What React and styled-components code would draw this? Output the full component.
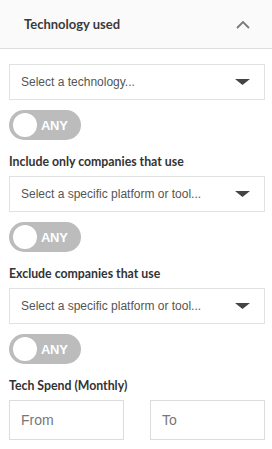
import React from 'react';
import styled, { createGlobalStyle } from 'styled-components';

const GlobalStyle = createGlobalStyle`
    html, body {
        margin: 0;
        padding: 0;
        background: #ffffff;
    }
    * {
        box-sizing: border-box;
    }
`;

const Panel = styled.div`
    width: 272px;
    height: 449px;
    background: #ffffff;
    font-family: Lato, "Open Sans", sans-serif;
`;

const Header = styled.div`
    display: flex;
    align-items: center;
    justify-content: space-between;
    height: 49px;
    padding: 0 22px 0 24px;
    background: #fafafa;
    border-bottom: 1px solid #dedede;
`;

const Title = styled.span`
    font-size: 13px;
    font-weight: 700;
    color: #3a3a3a;
`;

const Body = styled.div`
    display: flex;
    flex-direction: column;
    padding: 15px 7px 0 9px;
`;

const Label = styled.div`
    margin: 14px 0 6px;
    font-size: 12.3px;
    line-height: 16px;
    font-weight: 700;
    color: #333333;
`;

const Select = styled.div`
    display: flex;
    align-items: center;
    justify-content: space-between;
    height: 36px;
    padding: 0 14px 0 11px;
    border: 1px solid #e2e2e2;
    background: #ffffff;
    font-family: "Liberation Sans", Arial, sans-serif;
    font-size: 12px;
    color: #555555;
`;

const Toggle = styled.div`
    display: flex;
    align-items: center;
    gap: 4px;
    width: 72px;
    height: 30px;
    margin-top: 10px;
    padding-left: 4px;
    border-radius: 15px;
    background: #bcbcbc;
    font-family: "Liberation Sans", Arial, sans-serif;
    font-size: 13px;
    font-weight: 700;
    color: #ffffff;
    letter-spacing: -0.3px;
`;

const Knob = styled.span`
    width: 24px;
    height: 24px;
    border-radius: 50%;
    background: #ffffff;
`;

const RangeRow = styled.div`
    display: grid;
    grid-template-columns: 115px 115px;
    justify-content: space-between;
`;

const Input = styled.div`
    display: flex;
    align-items: center;
    height: 40px;
    padding-left: 11px;
    border: 1px solid #dcdcdc;
    font-family: "Liberation Sans", Arial, sans-serif;
    font-size: 14px;
    color: #777777;
`;

const Chevron = () => (
    <svg width="14" height="9" viewBox="0 0 14 9">
        <path d="M1 8 L7 2 L13 8" fill="none" stroke="#7a7a7a" strokeWidth="1.8" />
    </svg>
);

const Caret = () => (
    <svg width="15" height="6" viewBox="0 0 15 6">
        <path d="M0 0 H15 L7.5 6 Z" fill="#444444" />
    </svg>
);

const Filter = ({ placeholder }) => (
    <>
        <Select>
            <span>{placeholder}</span>
            <Caret />
        </Select>
        <Toggle>
            <Knob />
            ANY
        </Toggle>
    </>
);

const App = () => {
    return (
        <Panel>
            <GlobalStyle />
            <Header>
                <Title>Technology used</Title>
                <Chevron />
            </Header>
            <Body>
                <Filter placeholder="Select a technology..." />
                <Label>Include only companies that use</Label>
                <Filter placeholder="Select a specific platform or tool..." />
                <Label>Exclude companies that use</Label>
                <Filter placeholder="Select a specific platform or tool..." />
                <Label>Tech Spend (Monthly)</Label>
                <RangeRow>
                    <Input>From</Input>
                    <Input>To</Input>
                </RangeRow>
            </Body>
        </Panel>
    );
};

export default App;
